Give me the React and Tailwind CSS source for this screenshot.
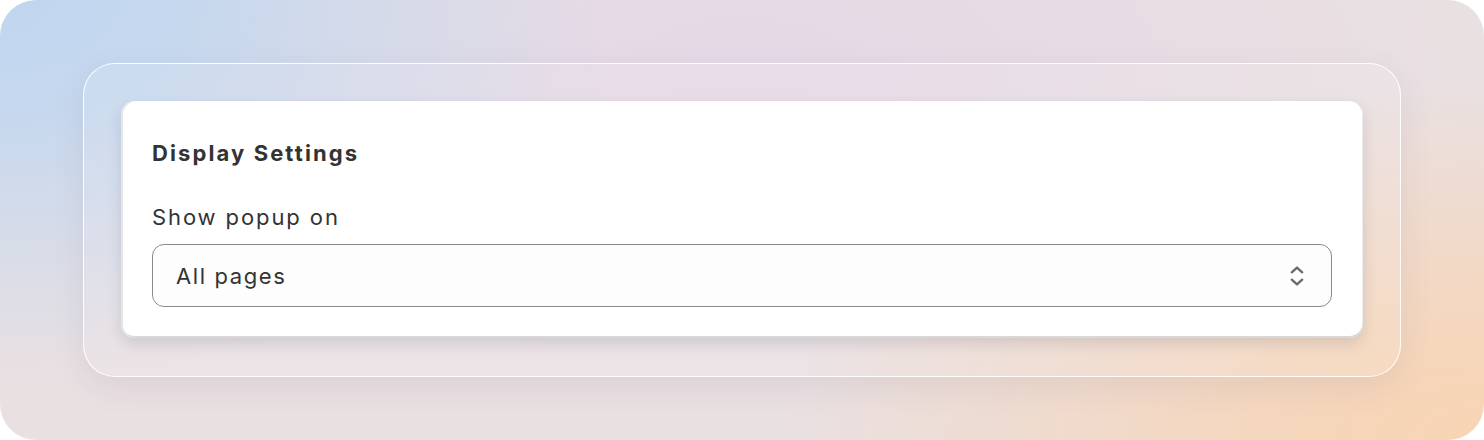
import React from "react";

const SelectChevrons = () => (
  <svg width="20" height="28" viewBox="0 0 20 28" fill="none" className="text-[#6b6b6b]">
    <path d="M4.8 10.3 L10 5.6 L15.2 10.3" stroke="currentColor" strokeWidth="2.4" strokeLinecap="round" strokeLinejoin="round" />
    <path d="M4.8 17.7 L10 22.4 L15.2 17.7" stroke="currentColor" strokeWidth="2.4" strokeLinecap="round" strokeLinejoin="round" />
  </svg>
);

const App = () => {
  return (
    <div className="w-[1484px] h-[440px] bg-white" style={{ fontFamily: "Inter, 'Noto Sans', sans-serif" }}>
      <div className="w-full h-full rounded-[36px] overflow-hidden pt-[63px] pl-[83px] bg-[#e9e0e2] bg-[radial-gradient(ellipse_620px_380px_at_0%_0%,#bfd6f0_0%,#c6d8ee_30%,rgba(214,216,234,0)_100%),radial-gradient(ellipse_700px_360px_at_100%_100%,#f8d4b2_0%,#f4d7bf_35%,rgba(236,220,220,0)_100%),radial-gradient(ellipse_700px_300px_at_50%_15%,#e5d8e6_0%,rgba(229,216,230,0)_100%)]">
        {/* Frame */}
        <div className="w-[1318px] h-[314px] rounded-[32px] border-[1.5px] border-white/90 bg-white/10 shadow-[0_10px_30px_rgba(120,110,130,0.12)] p-[37px]">
          {/* Card */}
          <div className="w-[1242px] h-[237px] rounded-[14px] bg-white px-[31px] pt-[38px] shadow-[0_6px_14px_rgba(90,90,110,0.18),inset_2px_0_0_#e6e6e6,inset_0_-2px_0_#d8d8d8,inset_-1px_0_0_#ececec]">
            <h2 className="text-[22px] leading-[28px] font-[650] text-[#333333] tracking-[2.1px]">Display Settings</h2>
            <div className="mt-[36px] text-[22px] leading-[28px] text-[#333333] tracking-[1.9px]">Show popup on</div>
            <div className="mt-[13px] h-[63px] w-[1180px] rounded-[12px] border-[1.5px] border-[#8a8a8a] bg-[#fdfdfd] flex items-center justify-between pl-[23px] pr-[24px]">
              <span className="text-[22px] leading-[28px] text-[#333333] tracking-[1.6px]">All pages</span>
              <SelectChevrons />
            </div>
          </div>
        </div>
      </div>
    </div>
  );
};

export default App;
